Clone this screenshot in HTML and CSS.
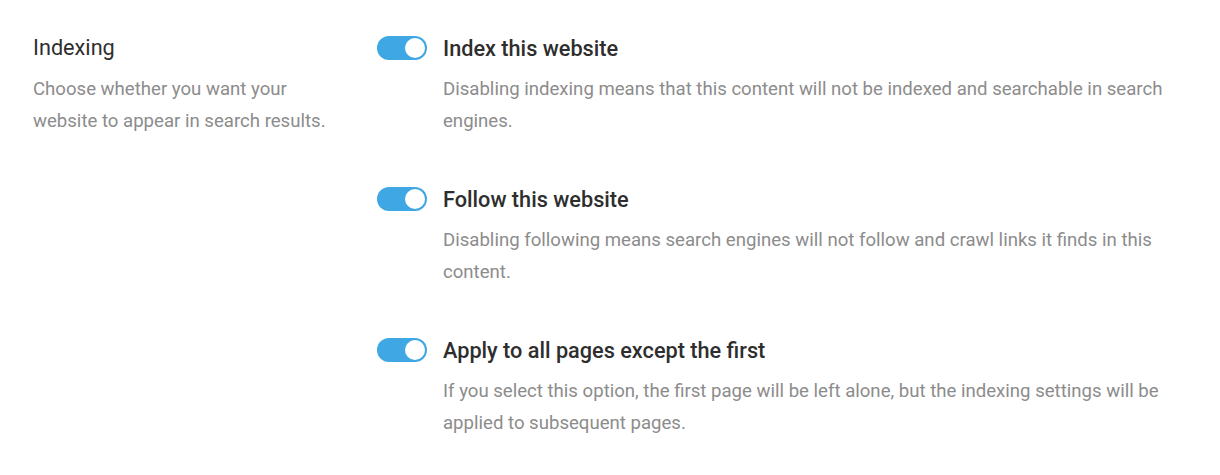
FILE: index.html
```html
<!DOCTYPE html>
<html>
<head>
    <title>Indexing Settings</title>
    <link rel="stylesheet" href="styles.css">
</head>
<body>
    <div class="settings-section">
        <!-- Section intro -->
        <div class="section-info">
            <h3 class="section-title">Indexing</h3>
            <p class="section-desc">Choose whether you want your website to appear in search results.</p>
        </div>

        <!-- Options -->
        <div class="section-options">
            <div class="option">
                <div class="option-head">
                    <label class="toggle">
                        <input type="checkbox" checked>
                        <span class="toggle-track"></span>
                    </label>
                    <span class="option-label">Index this website</span>
                </div>
                <p class="option-desc">Disabling indexing means that this content will not be indexed and searchable in search engines.</p>
            </div>

            <div class="option">
                <div class="option-head">
                    <label class="toggle">
                        <input type="checkbox" checked>
                        <span class="toggle-track"></span>
                    </label>
                    <span class="option-label">Follow this website</span>
                </div>
                <p class="option-desc">Disabling following means search engines will not follow and crawl links it finds in this content.</p>
            </div>

            <div class="option">
                <div class="option-head">
                    <label class="toggle">
                        <input type="checkbox" checked>
                        <span class="toggle-track"></span>
                    </label>
                    <span class="option-label">Apply to all pages except the first</span>
                </div>
                <p class="option-desc">If you select this option, the first page will be left alone, but the indexing settings will be applied to subsequent pages.</p>
            </div>
        </div>
    </div>
</body>
</html>
```

FILE: styles.css
```css
/* Base */
body {
    margin: 0;
    padding: 0;
    background-color: #ffffff;
    font-family: Roboto, "Liberation Sans", Arial, sans-serif;
    color: #333333;
}

/* Two column settings layout */
.settings-section {
    display: grid;
    grid-template-columns: 310px 1fr;
    column-gap: 34px;
    padding: 36px 40px 0 33px;
}

.section-title {
    margin: 0;
    height: 24px;
    line-height: 24px;
    font-size: 21.7px;
    font-weight: 400;
    color: #2e2e2e;
}

.section-desc {
    margin: 13px 0 0;
    font-size: 18.6px;
    line-height: 32px;
    color: #8c8c8c;
}

/* Options list */
.section-options {
    display: flex;
    flex-direction: column;
    gap: 50px;
}

.option-head {
    display: flex;
    align-items: center;
    gap: 16px;
    height: 24px;
}

.option-label {
    font-size: 21.7px;
    font-weight: 500;
    color: #2e2e2e;
}

.option-desc {
    margin: 13px 0 0 66px;
    font-size: 18.6px;
    line-height: 32px;
    color: #8c8c8c;
}

/* Toggle switch */
.toggle {
    position: relative;
    display: inline-block;
    width: 50px;
    height: 24px;
    flex-shrink: 0;
    cursor: pointer;
}

.toggle input {
    display: none;
}

.toggle-track {
    position: absolute;
    inset: 0;
    border-radius: 12px;
    background-color: #cccccc;
}

.toggle-track::after {
    content: "";
    position: absolute;
    top: 2px;
    left: 2px;
    width: 20px;
    height: 20px;
    border-radius: 50%;
    background-color: #ffffff;
}

.toggle input:checked + .toggle-track {
    background-color: #3fa7e3;
}

.toggle input:checked + .toggle-track::after {
    left: 28px;
}
```
